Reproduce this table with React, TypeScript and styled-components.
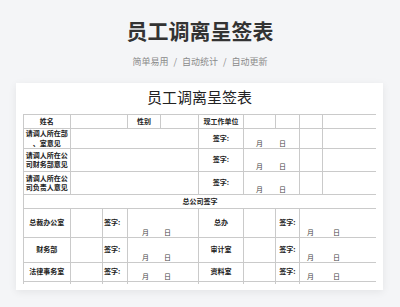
import React from "react";
import styled, { createGlobalStyle } from "styled-components";

const GlobalStyle = createGlobalStyle`
  html, body {
    margin: 0;
    padding: 0;
    background: #f4f5f7;
  }
  body {
    font-family: "Noto Sans CJK SC", "Noto Sans", sans-serif;
  }
`;

const Page = styled.div`
  width: 400px;
  height: 307px;
  overflow: hidden;
  padding-top: 15px;
  box-sizing: border-box;
`;

const Heading = styled.h1`
  margin: 0;
  text-align: center;
  font-size: 21px;
  line-height: 30px;
  font-weight: 700;
  color: #333;
`;

const Tagline = styled.div`
  margin-top: 10px;
  text-align: center;
  font-size: 9px;
  line-height: 14px;
  color: #8a8a8a;
`;

const Slash = styled.span`
  margin: 0 5px;
`;

const Card = styled.div`
  width: 367px;
  margin: 14px 0 0 16px;
  padding: 0 7px 6px;
  box-sizing: border-box;
  background: #fff;
  box-shadow: 0 2px 8px rgba(0, 0, 0, 0.07);
`;

const SheetTitle = styled.div`
  height: 31px;
  line-height: 27px;
  text-align: center;
  font-size: 15px;
  color: #222;
`;

const Clip = styled.div`
  height: 170px;
  overflow: hidden;
`;

const Sheet = styled.table`
  width: 353px;
  table-layout: fixed;
  border-collapse: collapse;
  border: 1.5px solid #5c5c5c;
  border-bottom: none;
`;

const Row = styled.tr<{ $h: number }>`
  height: ${(p) => p.$h}px;
`;

const Cell = styled.td<{ $bold?: boolean; $left?: boolean; $top?: boolean }>`
  border: 1px solid #cacaca;
  padding: 0;
  font-size: 7px;
  line-height: 9.5px;
  color: #222;
  font-weight: ${(p) => (p.$bold ? 700 : 400)};
  text-align: ${(p) => (p.$left ? "left" : "center")};
  vertical-align: ${(p) => (p.$top ? "top" : "middle")};
  padding-left: ${(p) => (p.$left ? "1px" : "0")};
  padding-top: ${(p) => (p.$top ? "2px" : "0")};
  white-space: nowrap;
  overflow: hidden;
`;

const DateCell = styled.td<{ $indent: number; $gap: number }>`
  border: 1px solid #cacaca;
  padding: 0 0 1px ${(p) => p.$indent}px;
  vertical-align: bottom;
  font-size: 7px;
  line-height: 8px;
  color: #444;
  white-space: nowrap;

  span + span {
    margin-left: ${(p) => p.$gap}px;
  }
`;

const colWidths = [46.5, 32.5, 25, 33, 38, 45, 32, 24, 23, 54];

const Sign = () => (
  <Cell $bold>签字:</Cell>
);

const MonthDay = ({ indent, gap, span = 2 }: { indent: number; gap: number; span?: number }) => (
  <DateCell colSpan={span} $indent={indent} $gap={gap}>
    <span>月</span>
    <span>日</span>
  </DateCell>
);

const opinionRows = [
  { h: 18, lines: ["请调人所在部", "、室意见"] },
  { h: 23, lines: ["请调人所在公", "司财务部意见"] },
  { h: 23, lines: ["请调人所在公", "司负责人意见"] },
];

const deptRows = [
  { h: 29, left: "总裁办公室", right: "总办" },
  { h: 25, left: "财务部", right: "审计室" },
  { h: 19, left: "法律事务室", right: "资料室" },
];

export default function App() {
  return (
    <Page>
      <GlobalStyle />
      <Heading>员工调离呈签表</Heading>
      <Tagline>
        简单易用<Slash>/</Slash>自动统计<Slash>/</Slash>自动更新
      </Tagline>
      <Card>
        <SheetTitle>员工调离呈签表</SheetTitle>
        <Clip>
          <Sheet>
            <colgroup>
              {colWidths.map((w, i) => (
                <col key={i} style={{ width: w }} />
              ))}
            </colgroup>
            <tbody>
              <Row $h={14}>
                <Cell $bold>姓名</Cell>
                <Cell colSpan={2} />
                <Cell $bold>性别</Cell>
                <Cell />
                <Cell $bold>现工作单位</Cell>
                <Cell />
                <Cell />
                <Cell />
                <Cell />
              </Row>
              {opinionRows.map((r) => (
                <Row $h={r.h} key={r.lines[0] + r.lines[1]}>
                  <Cell $bold>
                    {r.lines[0]}
                    <br />
                    {r.lines[1]}
                  </Cell>
                  <Cell colSpan={4} />
                  <Sign />
                  <MonthDay indent={12} gap={16} />
                  <Cell />
                  <Cell />
                </Row>
              ))}
              <Row $h={14}>
                <Cell colSpan={10} $bold>
                  总公司签字
                </Cell>
              </Row>
              {deptRows.map((r) => (
                <Row $h={r.h} key={r.left}>
                  <Cell $bold>{r.left}</Cell>
                  <Cell />
                  <Cell $bold $left>签字:</Cell>
                  <MonthDay indent={14} gap={15} />
                  <Cell $bold>{r.right}</Cell>
                  <Cell />
                  <Sign />
                  <MonthDay indent={7} gap={19} />
                </Row>
              ))}
              <Row $h={22}>
                <Cell />
                <Cell />
                <Cell />
                <Cell colSpan={2} />
                <Cell />
                <Cell />
                <Cell $bold $top>签字:</Cell>
                <Cell colSpan={2} />
              </Row>
            </tbody>
          </Sheet>
        </Clip>
      </Card>
    </Page>
  );
}
